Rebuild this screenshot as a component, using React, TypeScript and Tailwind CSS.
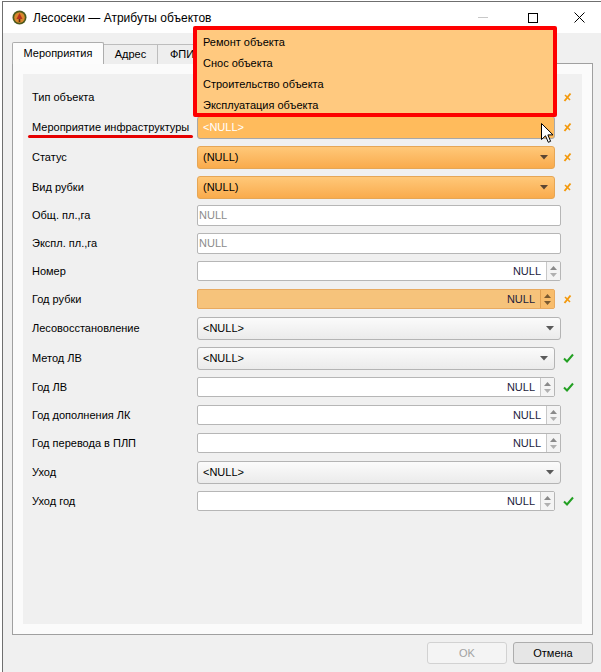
import type { ReactNode } from 'react';

type Mark = 'x' | 'check' | null;

function OrangeMark() {
  return (
    <svg width="9" height="10" viewBox="0 0 9 10">
      <path d="M1.5 9 L7.5 1.5" stroke="#f39a0f" strokeWidth="2" fill="none" />
      <path d="M2 3 L7 8" stroke="#f39a0f" strokeWidth="1.6" fill="none" />
    </svg>
  );
}

function CheckMark() {
  return (
    <svg width="11" height="10" viewBox="0 0 11 10">
      <path d="M1 5.5 L4 8.5 L10 1.5" stroke="#23a023" strokeWidth="2" fill="none" />
    </svg>
  );
}

function Arrow({ color = '#555' }: { color?: string }) {
  return (
    <svg width="8" height="5" viewBox="0 0 8 5">
      <path d="M0 0 L8 0 L4 4.5 Z" fill={color} />
    </svg>
  );
}

function Combo({ text, variant }: { text: string; variant: 'white' | 'orange' | 'active' }) {
  const look =
    variant === 'white'
      ? 'bg-gradient-to-b from-[#fbfbfb] to-[#ebebeb] border-[#b4b4b4] text-black'
      : variant === 'orange'
        ? 'bg-gradient-to-b from-[#ffc878] to-[#f9ab4c] border-[#e6a655] text-black'
        : 'bg-[#ffbb5c] border-[#a8a8a8] text-white';
  return (
    <div className={`flex h-[23px] w-full items-center rounded-[3px] border pl-[5px] pr-[6px] ${look}`}>
      <span className="flex-1">{text}</span>
      {variant !== 'active' && <Arrow color={variant === 'orange' ? '#5c4632' : '#5a5a5a'} />}
    </div>
  );
}

function LineEdit() {
  return (
    <div className="flex h-[21px] w-full items-center rounded-[2px] border border-[#b6b6b6] bg-white pl-[1px] text-[#8c8c8c]">
      NULL
    </div>
  );
}

function Spin({ orange = false }: { orange?: boolean }) {
  return (
    <div
      className={`flex h-[20px] w-full items-stretch rounded-[2px] border ${
        orange ? 'border-[#e8aa60] bg-[#f6c37b]' : 'border-[#b6b6b6] bg-white'
      }`}
    >
      <span className="flex flex-1 items-center justify-end pr-[5px] text-[#1c1c3c]">NULL</span>
      <div
        className={`flex w-[14px] flex-col items-center justify-center gap-[3px] border-l ${
          orange ? 'border-[#e0a050] bg-[#f8bd6c]' : 'border-[#c8c8c8] bg-[#f4f4f4]'
        }`}
      >
        <svg width="7" height="4" viewBox="0 0 7 4">
          <path d="M0 4 L7 4 L3.5 0 Z" fill={orange ? '#7a5a30' : '#8a8a8a'} />
        </svg>
        <svg width="7" height="4" viewBox="0 0 7 4">
          <path d="M0 0 L7 0 L3.5 4 Z" fill={orange ? '#7a5a30' : '#b0b0b0'} />
        </svg>
      </div>
    </div>
  );
}

function Row({
  label,
  h,
  mark = null,
  children,
  underline = false,
}: {
  label: string;
  h: number;
  mark?: Mark;
  children: ReactNode;
  underline?: boolean;
}) {
  const heights: Record<number, string> = { 27: 'h-[27px]', 28: 'h-[28px]', 30: 'h-[30px]' };
  return (
    <div className={`flex items-center pl-[9px] ${heights[h]}`}>
      <div className="relative w-[165px] shrink-0">
        {label}
        {underline && (
          <div className="absolute left-[-4px] top-[16px] h-[3px] w-[165px] rounded-full bg-[#e60000]" />
        )}
      </div>
      <div className={mark ? 'w-[358px]' : 'w-[364px]'}>{children}</div>
      {mark && (
        <div className="ml-[8px] flex w-[11px] items-center">
          {mark === 'x' ? <OrangeMark /> : <CheckMark />}
        </div>
      )}
    </div>
  );
}

export default function App() {
  return (
    <div className="relative h-[672px] w-[601px] overflow-hidden bg-white pt-[1px] pl-[2px] font-['Liberation_Sans',Arial,sans-serif] text-[11px] text-black">
      <div className="flex h-[671px] flex-col border-l border-t border-[#6f6f6f]">
        {/* title bar */}
        <div className="flex h-[31px] shrink-0 items-center bg-white pl-[9px]">
          <svg width="15" height="15" viewBox="0 0 15 15">
            <circle cx="7.5" cy="7.5" r="7" fill="#4d5a1e" />
            <circle cx="7.5" cy="7.5" r="5.3" fill="#d9882c" />
            <path d="M7.5 3 L10.5 9 L4.5 9 Z" fill="#b8321c" />
            <rect x="6.7" y="9" width="1.6" height="3" fill="#5a3010" />
          </svg>
          <span className="ml-[6px] text-[12px]">Лесосеки — Атрибуты объектов</span>
          <div className="flex-1" />
          <div className="mr-[40px] h-px w-[10px] bg-[#c8c8c8]" />
          <div className="mr-[36px] h-[10px] w-[10px] border border-black" />
          <svg width="11" height="11" viewBox="0 0 11 11" className="mr-[16px]">
            <path d="M0.5 0.5 L10.5 10.5 M10.5 0.5 L0.5 10.5" stroke="#000" strokeWidth="1" />
          </svg>
        </div>

        {/* body */}
        <div className="flex flex-1 flex-col bg-[#f0f0f0] pl-[9px] pr-[8px] pt-[9px]">
          <div className="relative z-10 -mb-px flex h-[22px] items-end">
            <div className="flex h-[22px] w-[92px] items-center justify-center rounded-t-[2px] border border-b-0 border-[#adadad] bg-[#fcfcfc]">
              Мероприятия
            </div>
            <div className="flex h-[20px] w-[54px] items-center justify-center border-t border-r border-[#bdbdbd] bg-[#eeeeee]">
              Адрес
            </div>
            <div className="flex h-[20px] w-[60px] items-center border-t border-r border-[#bdbdbd] bg-[#eeeeee] pl-[12px]">
              ФПИ
            </div>
          </div>

          <div className="flex h-[572px] w-[581px] flex-col border border-[#a0a0a0] bg-[#fbfbfb] p-[10px]">
            <div className="flex flex-1 flex-col bg-[#f0f0f0] pt-[8px]">
              <Row label="Тип объекта" h={30} mark="x">
                <Combo text="" variant="orange" />
              </Row>
              <Row label="Мероприятие инфраструктуры" h={30} mark="x" underline>
                <Combo text="<NULL>" variant="active" />
              </Row>
              <Row label="Статус" h={30} mark="x">
                <Combo text="(NULL)" variant="orange" />
              </Row>
              <Row label="Вид рубки" h={30} mark="x">
                <Combo text="(NULL)" variant="orange" />
              </Row>
              <Row label="Общ. пл.,га" h={27}>
                <LineEdit />
              </Row>
              <Row label="Экспл. пл.,га" h={28}>
                <LineEdit />
              </Row>
              <Row label="Номер" h={28}>
                <Spin />
              </Row>
              <Row label="Год рубки" h={28} mark="x">
                <Spin orange />
              </Row>
              <Row label="Лесовосстановление" h={30}>
                <Combo text="<NULL>" variant="white" />
              </Row>
              <Row label="Метод ЛВ" h={30} mark="check">
                <Combo text="<NULL>" variant="white" />
              </Row>
              <Row label="Год ЛВ" h={28} mark="check">
                <Spin />
              </Row>
              <Row label="Год дополнения ЛК" h={28}>
                <Spin />
              </Row>
              <Row label="Год перевода в ПЛП" h={28}>
                <Spin />
              </Row>
              <Row label="Уход" h={30}>
                <Combo text="<NULL>" variant="white" />
              </Row>
              <Row label="Уход год" h={28} mark="check">
                <Spin />
              </Row>
            </div>
          </div>

          <div className="mt-[7px] flex justify-end gap-[6px]">
            <button className="h-[22px] w-[80px] rounded-[3px] border border-[#d2d2d2] bg-[#f4f4f4] text-[#a2a2a2]">
              OK
            </button>
            <button className="h-[22px] w-[80px] rounded-[3px] border border-[#adadad] bg-[#e6e6e6]">
              Отмена
            </button>
          </div>
        </div>
      </div>

      {/* open dropdown list */}
      <div className="absolute left-[193px] top-[26px] z-20 h-[91px] w-[364px] overflow-hidden rounded-[2px] border-[4px] border-[#fe0000] bg-[#ffc97f] pt-[2px] pl-[6px]">
        {['Ремонт объекта', 'Снос объекта', 'Строительство объекта', 'Эксплуатация объекта'].map((t) => (
          <div key={t} className="flex h-[21px] items-center">
            {t}
          </div>
        ))}
      </div>

      {/* mouse pointer */}
      <svg width="13" height="21" viewBox="0 0 13 21" className="absolute left-[541px] top-[123px] z-30">
        <path d="M0.5 0.5 L0.5 16.5 L4.5 12.8 L7.3 19.3 L9.6 18.3 L6.9 11.9 L12 11.9 Z" fill="#fff" stroke="#000" strokeWidth="1" strokeLinejoin="round" />
      </svg>
    </div>
  );
}
